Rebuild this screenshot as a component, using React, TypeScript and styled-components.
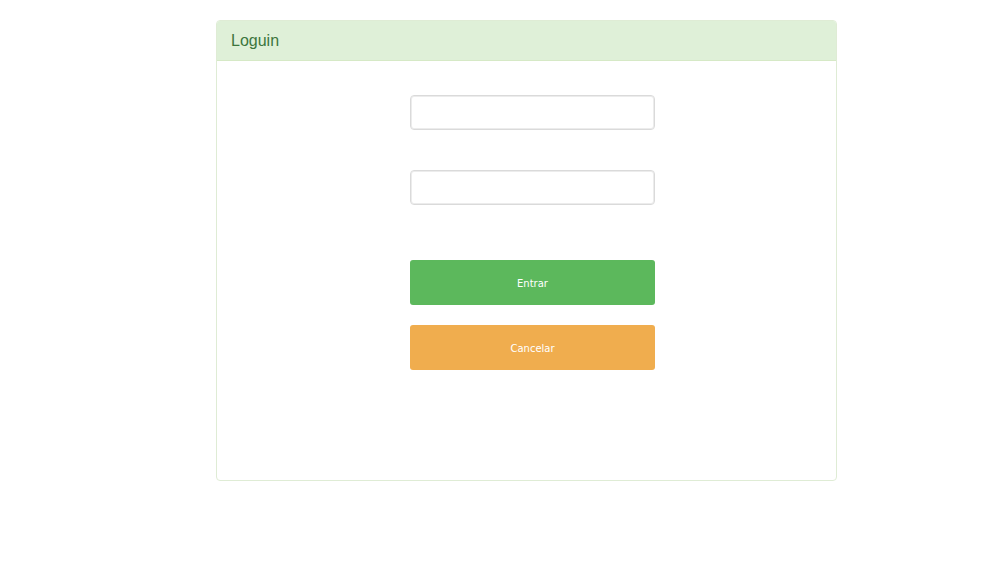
import React from 'react';
import styled, { createGlobalStyle } from 'styled-components';

const GlobalStyle = createGlobalStyle`
  body {
    margin: 0;
    background: #ffffff;
    font-family: "Liberation Sans", Arial, sans-serif;
  }
`;

const Page = styled.div`
  padding: 20px 0 0 216px;
`;

const Panel = styled.section`
  width: 621px;
  height: 461px;
  box-sizing: border-box;
  border: 1px solid #dfecd5;
  border-radius: 4px;
  background: #fff;
  display: flex;
  flex-direction: column;
  overflow: hidden;
`;

const PanelHeading = styled.header`
  height: 40px;
  box-sizing: border-box;
  padding: 1px 14px 0;
  display: flex;
  align-items: center;
  background: #dff0d8;
  border-bottom: 1px solid #d6e9c6;
  color: #3c763d;
  font-size: 16px;
`;

const PanelBody = styled.div`
  padding: 34px 0 0 193px;
`;

const Form = styled.form`
  width: 245px;
  display: flex;
  flex-direction: column;
`;

const Input = styled.input`
  height: 35px;
  box-sizing: border-box;
  border: 1px solid #dadada;
  border-radius: 4px;
  padding: 6px 12px;
  font-size: 14px;
  font-family: inherit;
  margin-bottom: 40px;
  box-shadow: inset 0 0 0 1px #ececec;
`;

const Button = styled.button<{ $color: string }>`
  height: 45px;
  border: none;
  border-radius: 3px;
  padding-top: 2px;
  background: ${(p) => p.$color};
  color: #fff;
  font-family: "DejaVu Sans", sans-serif;
  font-size: 10px;
  cursor: pointer;
  & + & {
    margin-top: 20px;
  }
`;

const Spacer = styled.div`
  height: 15px;
`;

export default function App() {
  return (
    <>
      <GlobalStyle />
      <Page>
        <Panel>
          <PanelHeading>Loguin</PanelHeading>
          <PanelBody>
            <Form onSubmit={(e) => e.preventDefault()}>
              <Input type="text" />
              <Input type="password" />
              <Spacer />
              <Button type="submit" $color="#5cb85c">Entrar</Button>
              <Button type="button" $color="#f0ad4e">Cancelar</Button>
            </Form>
          </PanelBody>
        </Panel>
      </Page>
    </>
  );
}
